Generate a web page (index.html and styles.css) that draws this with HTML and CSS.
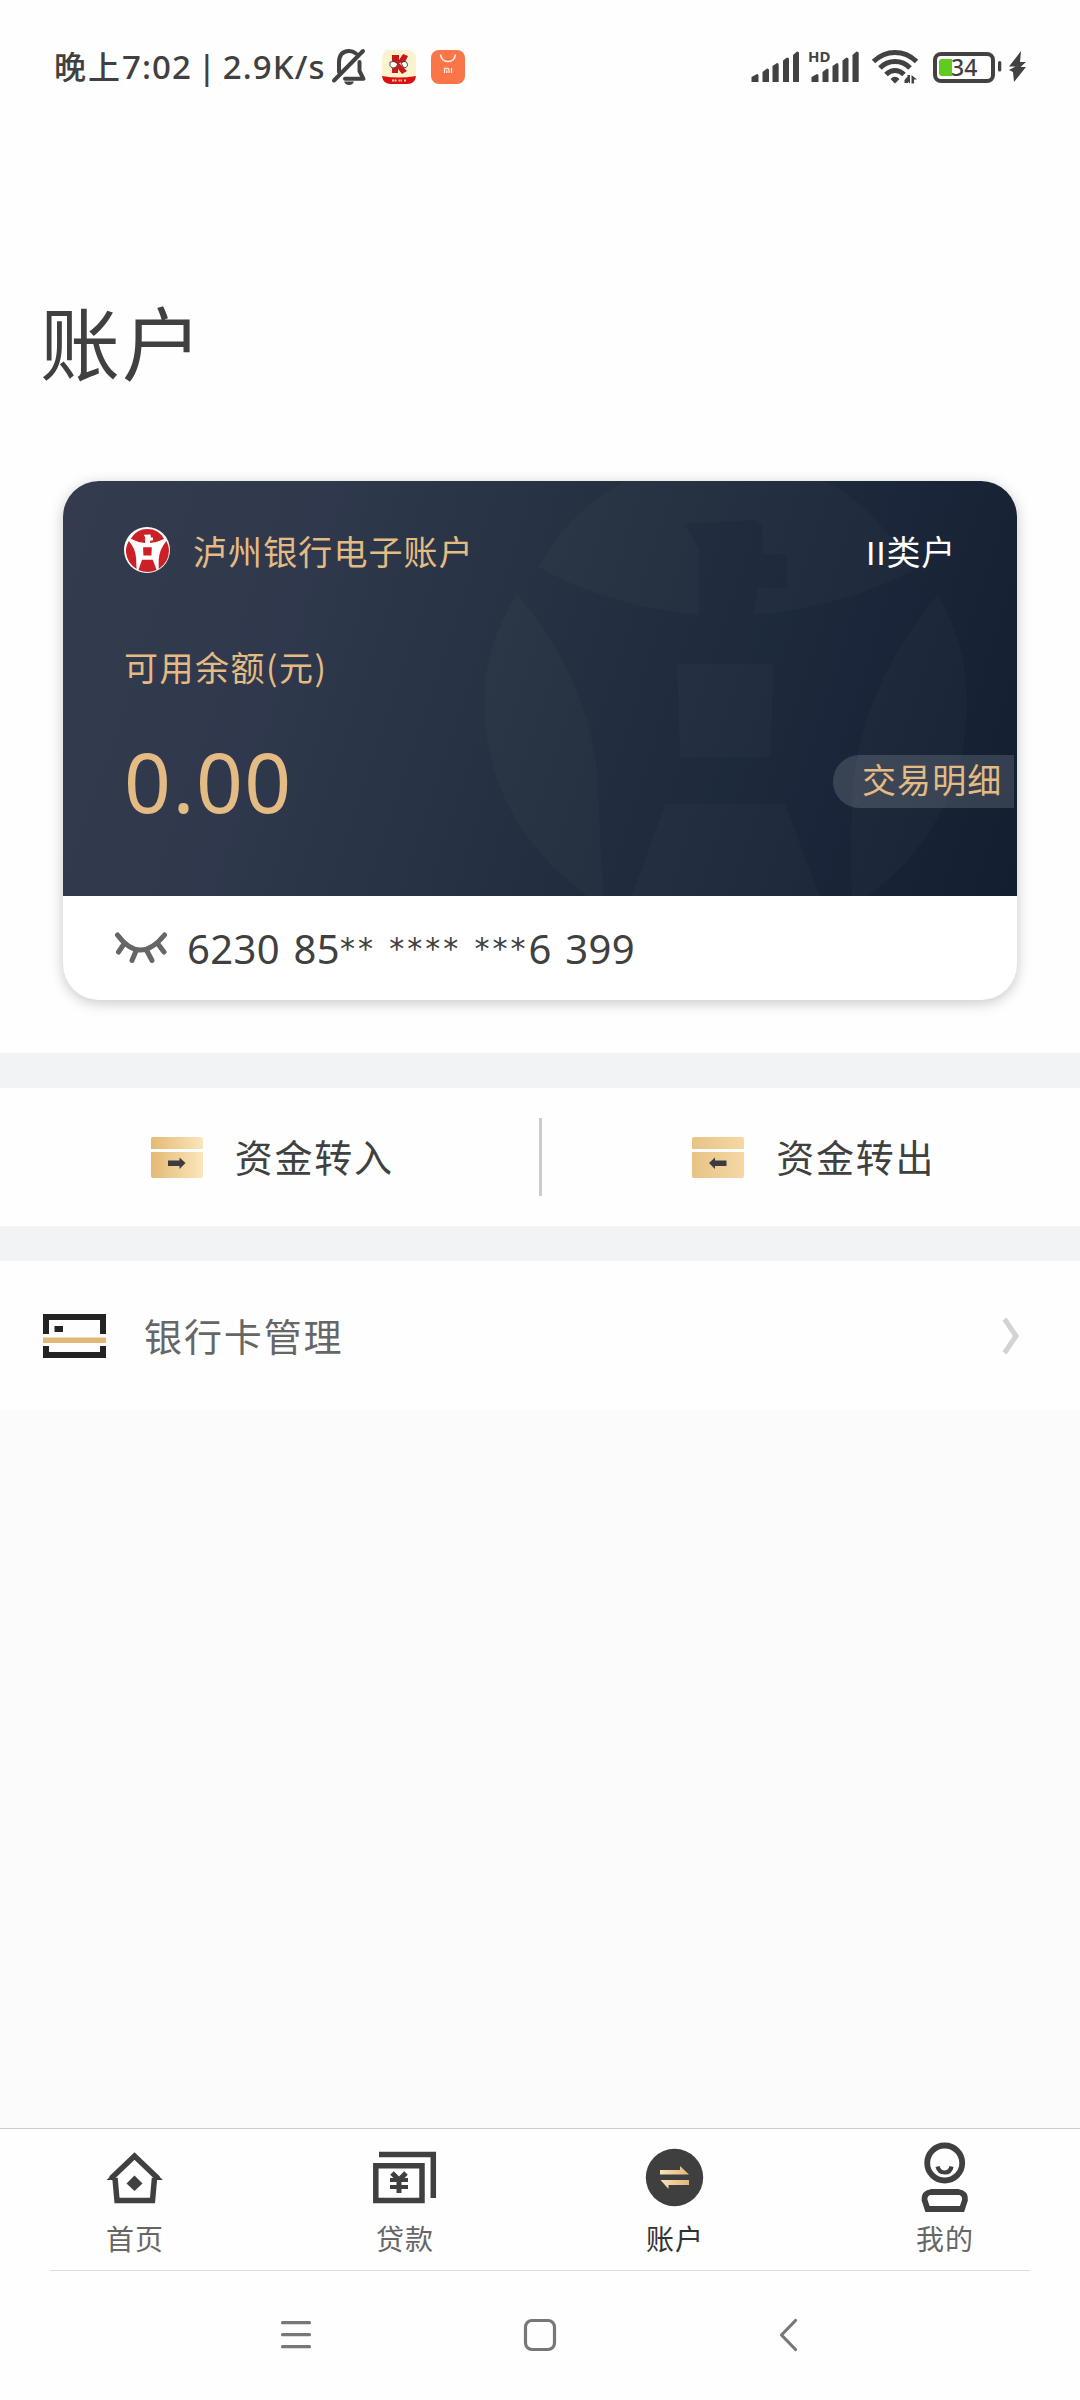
FILE: index.html
```html
<!DOCTYPE html>
<html lang="zh-CN">
<head>
<meta charset="utf-8">
<title>账户</title>
<link rel="stylesheet" href="styles.css">
</head>
<body>
<svg class="defs" width="0" height="0" aria-hidden="true">
  <symbol id="emblem" viewBox="485 459 482 482">
    <path d="M538 567Q600 459 726 459T912 571Q840 608 753 615L758 588H787V554H762V526L756 520L684 524L699 549V615Q610 607 538 567Z"/>
    <path d="M517 594Q484 646 484 703Q486 830 604 908Q600 840 598 781Q590 680 517 594Z"/>
    <path d="M938 594Q967 646 967 703Q966 830 852 908Q850 850 852 799Q858 690 938 594Z"/>
    <path d="M677 664H774L770 757H680Z"/>
    <path d="M665 804H785L828 918Q726 962 624 918Z"/>
  </symbol>
</svg>
<div class="screen">
  <header class="status">
    <span class="clock">晚上<span class="clock-num">7:02 | 2.9K/s</span></span>
    <svg class="bell" width="36" height="40" viewBox="0 0 36 40" fill="none" stroke="#424242" stroke-width="4" stroke-linecap="round" stroke-linejoin="round">
      <path d="M3 33.500 32 4"/><path d="M8 25V16Q8 4 18 4Q22 4 25 6.500"/><path d="M28.500 15V24L32.500 31.800H14"/>
      <path d="M13 34.500H23Q21.500 38 18 38T13 34.500Z" fill="#424242" stroke="none"/>
    </svg>
    <svg class="app" width="34" height="34" viewBox="0 0 34 34">
      <rect width="34" height="34" rx="8" fill="#fbf3cd"/>
      <path d="M0 26Q17 29 34 26Q33 34 25 34H9Q1 34 0 26Z" fill="#dc1010"/>
      <path d="M10 5H17V10L21 4L26 6L23 12L17 13L25 21L20 24L16 19V23H10V18L13 14L10 12Z" fill="#c9181b"/>
      <path d="M8 12Q12 10 16 14Q14 19 10 18Q7 16 8 12ZM19 13Q24 10 25 13Q27 17 22 18Z" fill="#fff" stroke="#222" stroke-width=".8"/>
      <path d="M10 30.500H15M16.500 30.500H20M22 30.500H24" stroke="#f7c9b8" stroke-width="2" stroke-dasharray="2 .6"/>
    </svg>
    <svg class="app" width="34" height="34" viewBox="0 0 34 34" fill="none">
      <rect width="34" height="34" rx="8" fill="#fa7547"/>
      <path d="M9.500 4.500Q10.500 11.500 17 11.500T24.500 4.500" stroke="#fff3ec" stroke-width="1.600"/>
      <path d="M13.500 23V18.500H16.500Q18 18.500 18 20V23M15.800 20.500V23M20.500 18V23" stroke="#ffe9df" stroke-width="1.300"/>
    </svg>
    <span class="spacer"></span>
    <svg class="radio" width="168" height="54" viewBox="750 40 168 54" fill="#424242">
      <path d="M751.500 82V77L757 74Q758.500 74 758.500 76V82ZM762.500 82V72L767 68.500Q769 68.500 769 70V82ZM772.500 82V66L777 63Q778.700 63 778.700 65V82ZM783 82V60.500L787 57.500Q789 57.500 789 59V82ZM793 82V55L797 51.500Q799 51.500 799 53V82Z"/>
      <path d="M811.500 82V77L817 74Q818.500 74 818.500 76V82ZM822.500 82V72L827 68.500Q828.500 68.500 828.500 70V82ZM832.500 82V66L837 63Q838.500 63 838.500 65V82ZM842.500 82V60.500L846.500 57.500Q848.500 57.500 848.500 59V82ZM852.500 82V55L856.500 51.500Q858.700 51.500 858.700 53V82Z"/>
      <text class="hd" x="808" y="62">HD</text>
      <g fill="none" stroke="#424242" stroke-width="5">
        <path d="M873.500 61.500Q883 52.500 895 52.500T916.500 61.500"/><path d="M880 68Q886 61.500 895 61.500T910 68"/><path d="M886 74.500Q890 70.500 895 70.500T904 74.500"/>
      </g>
      <path d="M890.500 79Q895 74.500 899.500 79L895 83.500ZM904.500 80 908 76V83H904.500ZM905 79.500H907.500V75H910V83.500ZM911.500 83.500V75L917 79.500H914V83.500Z"/>
    </svg>
    <span class="battery"><span class="level"></span><span class="pct">34</span></span>
    <svg class="charge" width="30" height="34" viewBox="997 50 30 34" fill="#424242">
      <rect x="998" y="61" width="3.300" height="10.500" rx="1.600"/>
      <path d="M1021 51 1009 66.500H1015.500L1009 70L1013 72L1014 82L1026 67H1020.500L1026 62H1020Z"/>
    </svg>
  </header>

  <h1 class="title">账户</h1>

  <section class="card">
    <div class="card-main">
      <svg class="watermark" width="482" height="482"><use href="#emblem"/></svg>
      <div class="card-head">
        <span class="logo"><svg width="43" height="43"><use href="#emblem"/></svg></span>
        <span class="bank">泸州银行电子账户</span>
        <span class="kind">II类户</span>
      </div>
      <div class="label">可用余额(元)</div>
      <div class="balance">
        <span class="amount">0.00</span>
        <span class="detail">交易明细</span>
      </div>
    </div>
    <div class="card-no">
      <svg width="54" height="32" viewBox="0 0 54 32" fill="none" stroke="#666" stroke-width="5" stroke-linecap="round">
        <path d="M3.500 3Q26 33 50.500 3M10 12 4.500 20M22 19 18 28.500M33 19 38 28.500M44 12 50 20"/>
      </svg>
      <span class="digits">6230 85<i>**</i> <i>****</i> <i>***</i>6 399</span>
    </div>
  </section>

  <section class="transfers">
    <div class="transfer">
      <svg width="52" height="41" viewBox="0 0 52 41">
        <defs><linearGradient id="gin"><stop offset="0" stop-color="#e4b974"/><stop offset="1" stop-color="#fbe6bc"/></linearGradient></defs>
        <path d="M0 12V2Q0 0 2 0H50Q52 0 52 2V12ZM0 15H52V39Q52 41 50 41H2Q0 41 0 39Z" fill="url(#gin)"/>
        <path d="M17 23.500H28.500V20.500L34.500 26L28.500 32V29H17Z" fill="#3c3c40"/>
      </svg>
      <span>资金转入</span>
    </div>
    <div class="rule"></div>
    <div class="transfer">
      <svg width="52" height="41" viewBox="0 0 52 41">
        <defs><linearGradient id="gout"><stop offset="0" stop-color="#e8c385"/><stop offset="1" stop-color="#f5d7a5"/></linearGradient></defs>
        <path d="M0 12V2Q0 0 2 0H50Q52 0 52 2V12ZM0 15H52V39Q52 41 50 41H2Q0 41 0 39Z" fill="url(#gout)"/>
        <path d="M34.500 23.500H23V20.500L17 26L23 32V29H34.500Z" fill="#3c3c40"/>
      </svg>
      <span>资金转出</span>
    </div>
  </section>

  <section class="row">
    <svg width="63" height="44" viewBox="0 0 63 44">
      <path d="M0 20V0H63V20H57V6H6V20ZM0 32H6V38H57V32H63V44H0ZM11.500 12H20V18H11.500Z" fill="#232323"/>
      <path d="M0 23.500H63V29H0Z" fill="#e2b878"/>
    </svg>
    <span>银行卡管理</span>
    <svg class="chev" width="18" height="38" viewBox="0 0 18 38" fill="none" stroke="#d3d3d4" stroke-width="5"><path d="M2.500 2 14 19 2.500 36"/></svg>
  </section>

  <main class="blank"></main>

  <nav class="tabs">
    <div class="tab">
      <svg width="64" height="72" viewBox="103 2142 64 72" fill="none" stroke="#404040" stroke-width="5.500">
        <path d="M115 2178 117 2200.500H152.500L154.500 2178"/><path d="M111 2178.500 134.500 2156 158 2178.500"/>
        <path d="M106.500 2180 113 2174V2180ZM163 2180 156.500 2174V2180ZM134.500 2175.500 142.500 2183.500 134.500 2191 126.500 2183.500Z" fill="#404040" stroke="none"/>
      </svg>
      <span>首页</span>
    </div>
    <div class="tab">
      <svg width="64" height="72" viewBox="373 2142 64 72" fill="none" stroke="#404040" stroke-width="5.500">
        <path d="M375.800 2165.800H422V2200.500H375.800ZM379 2154.500H433.300V2198"/>
        <path d="M392 2173 399 2180 406 2173M399 2178V2193" stroke-width="5"/>
        <path d="M390 2180H408M390 2187H408" stroke-width="3.800"/>
      </svg>
      <span>贷款</span>
    </div>
    <div class="tab active">
      <svg width="64" height="72" viewBox="643 2142 64 72">
        <defs><linearGradient id="gsw"><stop offset="0" stop-color="#f7e2b8"/><stop offset="1" stop-color="#e2b676"/></linearGradient></defs>
        <circle cx="674.500" cy="2177.500" r="28.700" fill="#3f3f40"/>
        <path d="M660 2170H680V2166L689 2174.500H660ZM689 2185H668.500V2189L660.500 2180H689Z" fill="url(#gsw)"/>
      </svg>
      <span>账户</span>
    </div>
    <div class="tab">
      <svg width="64" height="72" viewBox="913 2142 64 72" fill="none" stroke="#404040" stroke-width="5.800">
        <circle cx="944.700" cy="2163" r="17.500"/><path d="M937.500 2166.500Q939 2172.500 944.700 2172.500T951.500 2166.500" stroke-width="4.200"/>
        <path d="M931 2192H958.500Q965.500 2193 965 2200L962 2209H927.500L924.500 2200Q924 2193 931 2192Z"/>
      </svg>
      <span>我的</span>
    </div>
  </nav>

  <footer class="sysnav">
    <svg width="1080" height="40" viewBox="0 2315 1080 40" fill="none" stroke="#777" stroke-width="3.200" stroke-linecap="round" stroke-linejoin="round">
      <path d="M282.500 2322.700H309.500M282.500 2334.700H309.500M282.500 2346.700H309.500"/>
      <rect x="525.500" y="2320.500" width="29" height="29" rx="6.500"/>
      <path d="M795.500 2320.500 781.500 2335 795.500 2349.500"/>
    </svg>
  </footer>
</div>
</body>
</html>
```
FILE: styles.css
```css
* { box-sizing: border-box; }
body {
  margin: 0;
  background: #fefefe;
  color: #404040;
  font-family: "Noto Sans", "Noto Sans CJK SC", sans-serif;
}
svg { display: block; flex: none; }
.defs { position: absolute; }
.screen { width: 1080px; height: 2400px; display: flex; flex-direction: column; overflow: hidden; }

.status { height: 134px; flex: none; display: flex; align-items: center; padding: 0 53px 0 54px; }
.clock { width: 277px; font: 500 32px/40px "Noto Sans CJK SC", sans-serif; letter-spacing: 2px; white-space: nowrap; padding-bottom: 3px; }
.clock-num { font-family: "Noto Sans", sans-serif; font-size: 33px; letter-spacing: 1.100px; word-spacing: -4px; }
.app { margin-left: 15px; }
.spacer { flex: 1; }
.hd { font: 700 15px "Noto Sans", sans-serif; }
.battery {
  width: 62px; height: 31px; margin-left: 15px;
  border: 4.500px solid #424242; border-radius: 8px;
  display: flex; align-items: center; padding-left: 2px;
}
.level { width: 13px; height: 17px; border-radius: 3px 0 0 3px; background: #5ecb1e; }
.pct { font: 500 23px/20px "Noto Sans", sans-serif; margin-left: -1px; }
.charge { margin-left: 2px; }

.title { margin: 151px 0 0 40px; height: 116px; flex: none; font-weight: 400; font-size: 80px; line-height: 116px; letter-spacing: 2px; }

.card {
  width: 954px; height: 519px; margin: 80px 0 53px 63px; flex: none;
  border-radius: 36px; overflow: hidden; background: #fff;
  box-shadow: 0 3px 14px rgba(0, 0, 0, .22);
  display: flex; flex-direction: column;
}
.card-main {
  position: relative; height: 415px; overflow: hidden;
  background: linear-gradient(108deg, #343b4f 0%, #2f384c 25%, #243041 52%, #1b263a 78%, #131e31 100%);
  color: #e3bb83; font-size: 34px; letter-spacing: 1.100px;
  padding: 46px 3px 0 61px;
}
.watermark { position: absolute; left: 422px; top: -22px; fill: rgba(255, 255, 255, .02); }
.card-head { position: relative; display: flex; align-items: center; height: 46px; }
.logo { width: 46px; height: 46px; border-radius: 50%; background: #fff; display: flex; align-items: center; justify-content: center; fill: #cb2027; margin-right: 23px; }
.kind { margin-left: auto; padding-right: 58px; color: #fff; letter-spacing: .8px; font-family: "Liberation Sans", "Noto Sans CJK SC", sans-serif; }
.label { position: relative; height: 50px; line-height: 50px; margin-top: 69px; font-family: "Noto Sans CJK SC", sans-serif; letter-spacing: 1.500px; }
.balance { position: relative; display: flex; align-items: center; justify-content: space-between; height: 110px; margin-top: 34px; }
.amount { font-size: 82px; line-height: 110px; letter-spacing: 1.500px; }
.detail { width: 181px; height: 53px; margin-top: 0; padding-left: 29px; line-height: 50px; white-space: nowrap; background: rgba(255, 255, 255, .14); border-radius: 27px 0 0 27px; }
.card-no { flex: 1; display: flex; align-items: center; padding-left: 51px; gap: 19px; }
.digits { font-size: 40px; line-height: 50px; letter-spacing: .4px; word-spacing: 2.500px; white-space: nowrap; padding-top: 1px; }
.digits i { font: normal 30px/20px "DejaVu Sans", sans-serif; letter-spacing: 3px; vertical-align: 5px; }

.transfers { height: 208px; flex: none; border: solid #f2f3f5; border-width: 35px 0; display: flex; align-items: center; background: #fefefe; }
.transfer { flex: 1; display: flex; align-items: center; justify-content: center; gap: 32px; font-size: 38px; letter-spacing: 1.800px; padding-left: 6px; }
.transfer span, .row span { padding-bottom: 3px; }
.rule { width: 3px; height: 78px; background: #ccc; }

.row { height: 149px; flex: none; display: flex; align-items: center; padding: 0 60px 0 43px; background: #fefefe; font-size: 38px; letter-spacing: 1.900px; color: #666; }
.row span { margin-left: 38px; }
.chev { margin-left: auto; }

.blank { flex: 1; background: #fbfbfb; }

.tabs { height: 142px; flex: none; display: flex; border-top: 1px solid #ccc; }
.tab { flex: 1; display: flex; flex-direction: column; align-items: center; padding-top: 13px; font-size: 28px; line-height: 40px; letter-spacing: 1px; color: #666; }
.tab span { margin-top: 5px; }
.tab.active { color: #333; }
.sysnav { height: 130px; flex: none; position: relative; padding-top: 45px; }
.sysnav::before { content: ""; position: absolute; left: 50px; right: 50px; top: 0; height: 1px; background: #ddd; }
```
